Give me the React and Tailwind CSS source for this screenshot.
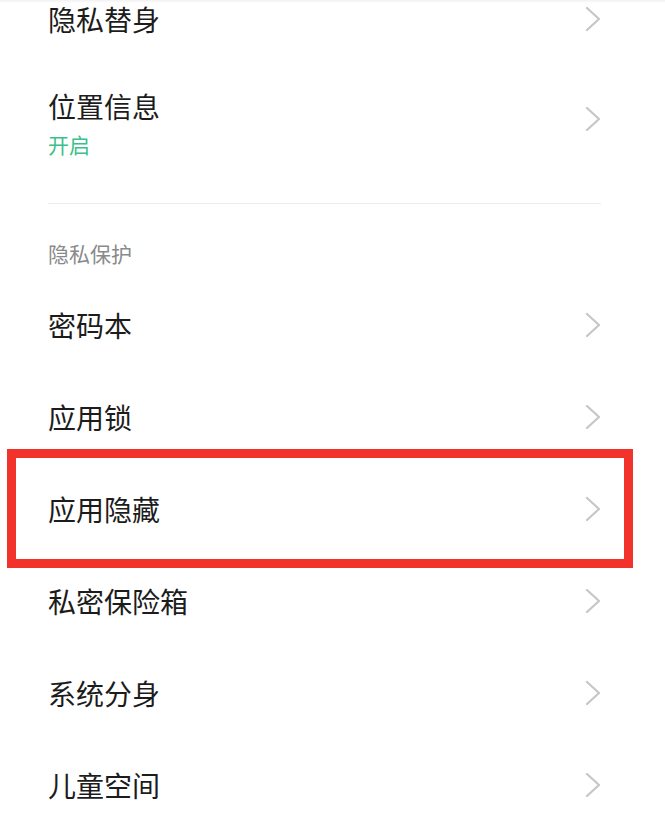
const FONT = '"Noto Sans CJK SC", "Noto Sans", sans-serif';

function Chevron() {
  return (
    <svg width="16" height="24" viewBox="0 0 16 24" fill="none" className="shrink-0">
      <polyline points="2,1 14,12 2,23" stroke="#c6c6c6" strokeWidth="2.2" strokeLinecap="round" strokeLinejoin="round" />
    </svg>
  );
}

function Row({ title, highlight = false }) {
  return (
    <div className="relative flex h-[92px] items-center justify-between pl-[48px] pr-[64px]">
      <span className="text-[28px] leading-[36px] text-[#1c1c1c]">{title}</span>
      <Chevron />
      {highlight && (
        <div className="pointer-events-none absolute -top-[14px] -bottom-[13px] left-[7px] right-[32px] border-[9px] border-[#f2332c]" />
      )}
    </div>
  );
}

const privacyItems = ['密码本', '应用锁', '应用隐藏', '私密保险箱', '系统分身', '儿童空间'];

export default function App() {
  return (
    <div className="h-[814px] w-[665px] overflow-hidden bg-white" style={{ fontFamily: FONT }}>
      <div className="h-[3px] bg-gradient-to-b from-[#f1f1f1] to-white" />
      <div className="flex h-[32px] items-center justify-between pl-[48px] pr-[64px]">
        <span className="text-[28px] leading-[36px] text-[#1c1c1c]">隐私替身</span>
        <Chevron />
      </div>

      <div className="flex h-[168px] items-center justify-between pl-[48px] pr-[64px]">
        <div className="flex flex-col pt-[8px]">
          <span className="text-[28px] leading-[36px] text-[#1c1c1c]">位置信息</span>
          <span className="mt-[6px] text-[21px] leading-[28px] text-[#3dbf8b]">开启</span>
        </div>
        <Chevron />
      </div>

      <div className="ml-[48px] mr-[64px] h-px bg-[#ececec]" />

      <div className="h-[75px] pl-[48px] pt-[35px]">
        <span className="text-[21px] leading-[28px] text-[#8a8a8a]">隐私保护</span>
      </div>

      {privacyItems.map((item) => (
        <Row key={item} title={item} highlight={item === '应用隐藏'} />
      ))}
    </div>
  );
}
